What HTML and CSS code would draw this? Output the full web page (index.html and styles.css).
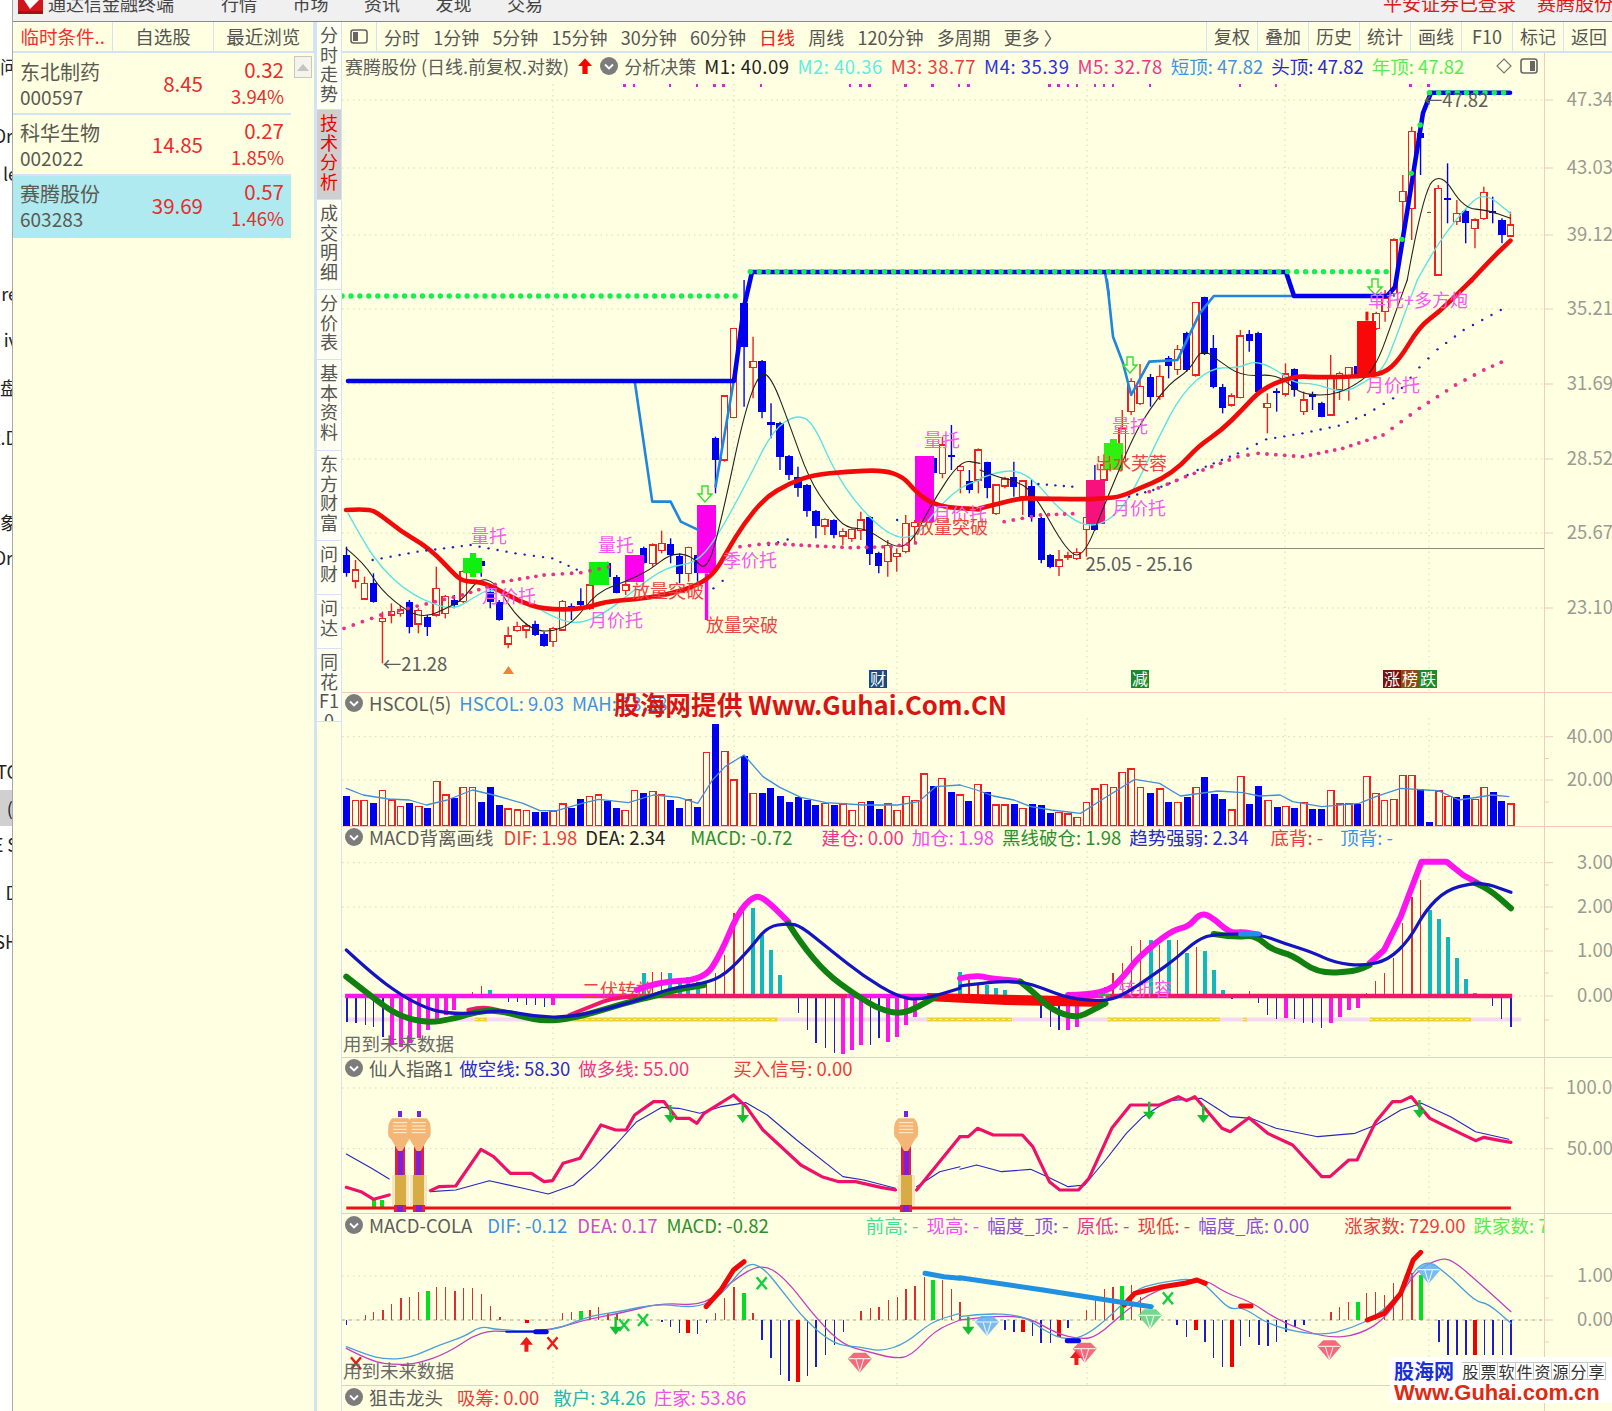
FILE: index.html
```html
<!DOCTYPE html>
<html lang="zh-CN">
<head>
    <meta charset="UTF-8">
    <title>通达信金融终端</title>
    <link rel="stylesheet" href="styles.css">
</head>
<body>
<div class="desk">
    <!-- the window behind the terminal, only its right edge shows -->
    <div class="behind">
        <div class="behind-line g54">问</div>
        <div class="behind-line g69">Dri</div>
        <div class="behind-line g38">le</div>
        <div class="behind-line g120">re</div>
        <div class="behind-line g46">iv</div>
        <div class="behind-line g48">盘</div>
        <div class="behind-line g50">x.D</div>
        <div class="behind-line g85">象</div>
        <div class="behind-line g35">Dri</div>
        <div class="behind-line g214">TC</div>
        <div class="behind-line g37 behind-picked">(I</div>
        <div class="behind-line g36">E S</div>
        <div class="behind-line g48">D</div>
        <div class="behind-line g49">SH</div>
    </div>

    <div class="app">
        <div class="titlebar">
            <svg class="logo" viewBox="0 0 25 14"><rect width="25" height="14" fill="#d2141c"/><path d="M6 0 L12 9 L21 0 Z" fill="#fff"/><rect y="11" width="25" height="3" fill="#a80f14"/></svg>
            <span class="app-name">通达信金融终端</span>
            <nav class="menu">
                <span>行情</span><span>市场</span><span>资讯</span><span>发现</span><span>交易</span>
            </nav>
            <div class="status">
                <span>平安证券已登录</span><span>赛腾股份</span>
            </div>
        </div>

        <div class="workspace">
            <!-- 左侧自选列表 -->
            <div class="stock-list">
                <div class="list-tabs">
                    <div class="list-tab is-on">临时条件..</div>
                    <div class="list-tab">自选股</div>
                    <div class="list-tab">最近浏览</div>
                </div>
                <div class="list-body">
                    <div class="rows">
                        <div class="stock">
                            <div class="stock-name"><span>东北制药</span><span>000597</span></div>
                            <div class="stock-price">8.45</div>
                            <div class="stock-change"><span>0.32</span><span class="pct">3.94%</span></div>
                        </div>
                        <div class="stock">
                            <div class="stock-name"><span>科华生物</span><span>002022</span></div>
                            <div class="stock-price">14.85</div>
                            <div class="stock-change"><span>0.27</span><span class="pct">1.85%</span></div>
                        </div>
                        <div class="stock is-picked">
                            <div class="stock-name"><span>赛腾股份</span><span>603283</span></div>
                            <div class="stock-price">39.69</div>
                            <div class="stock-change"><span>0.57</span><span class="pct">1.46%</span></div>
                        </div>
                    </div>
                    <div class="scroll-up"><svg viewBox="0 0 12 7" width="12" height="7"><path d="M6 0 L12 7 L0 7 Z" fill="#c4c4c0"/></svg></div>
                </div>
            </div>

            <!-- 竖排功能页签 -->
            <div class="side-tabs">
                <div class="side-tab t86">分时走势</div>
                <div class="side-tab t90 is-on">技术分析</div>
                <div class="side-tab t90">成交明细</div>
                <div class="side-tab t70">分价表</div>
                <div class="side-tab t91">基本资料</div>
                <div class="side-tab t90">东方财富</div>
                <div class="side-tab t54">问财</div>
                <div class="side-tab t54">问达</div>
                <div class="side-tab t73">同花F10</div>
            </div>

            <div class="chart-area">
                <div class="toolbar">
                    <div class="tool-icon"><svg viewBox="0 0 18 15" width="18" height="15"><rect x="1" y="1" width="16" height="13" rx="2.5" fill="none" stroke="#666" stroke-width="1.6"/><rect x="3" y="3" width="5" height="9" fill="#666"/></svg></div>
                    <div class="periods">
                        <span>分时</span><span>1分钟</span><span>5分钟</span><span>15分钟</span><span>30分钟</span><span>60分钟</span><span class="is-on">日线</span><span>周线</span><span>120分钟</span><span>多周期</span><span>更多 〉</span>
                    </div>
                    <div class="tools">
                        <span>复权</span><span>叠加</span><span>历史</span><span>统计</span><span>画线</span><span>F10</span><span>标记</span><span>返回</span>
                    </div>
                </div>

                <div class="panel panel-main">
                    <div class="legend legend-main">
                        <span class="c-gray stock-title">赛腾股份 (日线.前复权.对数)</span>
                        <svg class="up-arrow" viewBox="0 0 16 18" width="14" height="16"><path d="M8 0 L16 9 L11 9 L11 18 L5 18 L5 9 L0 9 Z" fill="#f00"/></svg>
                        <svg class="fold" viewBox="0 0 18 18"><circle cx="9" cy="9" r="9" fill="#7c7c7c"/><path d="M5 7.5 L9 11.5 L13 7.5" fill="none" stroke="#fff" stroke-width="1.8"/></svg>
                        <span class="c-gray stock-title">分析决策</span>
                        <span class="c-dark ma">M1: 40.09</span>
                        <span class="c-aqua ma">M2: 40.36</span>
                        <span class="c-red ma">M3: 38.77</span>
                        <span class="c-blue ma">M4: 35.39</span>
                        <span class="c-pink ma">M5: 32.78</span>
                        <span class="c-sky">短顶: 47.82</span>
                        <span class="c-navy">头顶: 47.82</span>
                        <span class="c-lime">年顶: 47.82</span>
                        <div class="legend-icons">
                            <svg viewBox="0 0 16 16" width="16" height="16"><path d="M8 1 L15 8 L8 15 L1 8 Z" fill="none" stroke="#777" stroke-width="1.2"/></svg>
                            <svg viewBox="0 0 18 16" width="18" height="16"><rect x="1" y="1" width="16" height="14" rx="2.5" fill="none" stroke="#666" stroke-width="1.6"/><rect x="10" y="3" width="5" height="10" fill="#666"/></svg>
                        </div>
                    </div>
                    <svg class="chart" id="chartMain" width="1270" height="608" viewBox="342 84 1270 608"></svg>
                </div>

                <div class="panel panel-vol">
                    <div class="legend">
                        <svg class="fold" viewBox="0 0 18 18"><circle cx="9" cy="9" r="9" fill="#7c7c7c"/><path d="M5 7.5 L9 11.5 L13 7.5" fill="none" stroke="#fff" stroke-width="1.8"/></svg>
                        <span class="c-gray">HSCOL(5)</span>
                        <span class="c-sky">HSCOL: 9.03</span>
                        <span class="c-sky">MAH: 13.28</span>
                    </div>
                    <svg class="chart" id="chartVol" width="1270" height="108" viewBox="342 718 1270 108"></svg>
                </div>

                <div class="panel panel-macd">
                    <div class="legend">
                        <svg class="fold" viewBox="0 0 18 18"><circle cx="9" cy="9" r="9" fill="#7c7c7c"/><path d="M5 7.5 L9 11.5 L13 7.5" fill="none" stroke="#fff" stroke-width="1.8"/></svg>
                        <span class="c-gray">MACD背离画线</span>
                        <span class="c-red m2">DIF: 1.98</span>
                        <span class="c-dark">DEA: 2.34</span>
                        <span class="c-green m17">MACD: -0.72</span>
                        <span class="c-pink m21">建仓: 0.00</span>
                        <span class="c-magenta">加仓: 1.98</span>
                        <span class="c-green">黑线破仓: 1.98</span>
                        <span class="c-navy">趋势强弱: 2.34</span>
                        <span class="c-red m14">底背: -</span>
                        <span class="c-sky m9">顶背: -</span>
                    </div>
                    <svg class="chart" id="chartMacd" width="1270" height="206" viewBox="342 851 1270 206"></svg>
                </div>

                <div class="panel panel-xr">
                    <div class="legend">
                        <svg class="fold" viewBox="0 0 18 18"><circle cx="9" cy="9" r="9" fill="#7c7c7c"/><path d="M5 7.5 L9 11.5 L13 7.5" fill="none" stroke="#fff" stroke-width="1.8"/></svg>
                        <span class="c-gray">仙人指路1</span>
                        <span class="c-navy mn2">做空线: 58.30</span>
                        <span class="c-pink">做多线: 55.00</span>
                        <span class="c-red m36">买入信号: 0.00</span>
                    </div>
                    <svg class="chart" id="chartXr" width="1270" height="131" viewBox="342 1082 1270 131"></svg>
                </div>

                <div class="panel panel-cola">
                    <div class="legend">
                        <svg class="fold" viewBox="0 0 18 18"><circle cx="9" cy="9" r="9" fill="#7c7c7c"/><path d="M5 7.5 L9 11.5 L13 7.5" fill="none" stroke="#fff" stroke-width="1.8"/></svg>
                        <span class="c-gray">MACD-COLA</span>
                        <span class="c-sky m7">DIF: -0.12</span>
                        <span class="c-purple m2">DEA: 0.17</span>
                        <span class="c-green m1">MACD: -0.82</span>
                        <span class="c-mint m89">前高: -</span>
                        <span class="c-magenta">现高: -</span>
                        <span class="c-violet">幅度_顶: -</span>
                        <span class="c-pink">原低: -</span>
                        <span class="c-red">现低: -</span>
                        <span class="c-violet">幅度_底: 0.00</span>
                        <span class="c-red m27">涨家数: 729.00</span>
                        <span class="c-lime">跌家数: 729.00</span>
                    </div>
                    <svg class="chart" id="chartCola" width="1270" height="145" viewBox="342 1240 1270 145"></svg>
                </div>

                <div class="panel panel-last">
                    <div class="legend">
                        <svg class="fold" viewBox="0 0 18 18"><circle cx="9" cy="9" r="9" fill="#7c7c7c"/><path d="M5 7.5 L9 11.5 L13 7.5" fill="none" stroke="#fff" stroke-width="1.8"/></svg>
                        <span class="c-gray">狙击龙头</span>
                        <span class="c-red m6">吸筹: 0.00</span>
                        <span class="c-teal m6">散户: 34.26</span>
                        <span class="c-magenta">庄家: 53.86</span>
                    </div>
                </div>
            </div>
        </div>
    </div>
</div>

<!-- 水印 -->
<div class="stamp-top">股海网提供 Www.Guhai.Com.CN</div>
<div class="stamp-corner">
    <div class="stamp-row">
        <span class="stamp-name">股海网</span>
        <span class="stamp-cells"><i>股</i><i>票</i><i>软</i><i>件</i><i>资</i><i>源</i><i>分</i><i>享</i></span>
    </div>
    <div class="stamp-url">Www.Guhai.com.cn</div>
</div>

<script src="charts.js"></script>
</body>
</html>
```

FILE: styles.css
```css
* {
    box-sizing: border-box;
}

html, body {
    margin: 0;
    width: 1612px;
    height: 1411px;
    overflow: hidden;
    background-color: #fff;
    font-family: "Noto Sans CJK SC", "Noto Sans", sans-serif;
    color: #555;
}

.desk {
    display: flex;
    height: 1411px;
}

/* 后面的窗口 */
.behind {
    width: 13px;
    flex: none;
    overflow: hidden;
    border-right: 1px solid #a8a8a8;
    font-size: 18px;
    color: #222;
}

.behind-line {
    height: 24px;
    line-height: 24px;
    width: 18px;
    display: flex;
    justify-content: flex-end;
    white-space: nowrap;
}

.behind-picked {
    background-color: #d0d0d0;
    height: 36px;
    line-height: 36px;
}

.g35 { margin-top: 11px; }
.g36 { margin-top: 6px; }
.g37 { margin-top: 7px; }
.g38 { margin-top: 14px; }
.g46 { margin-top: 22px; }
.g48 { margin-top: 24px; }
.g49 { margin-top: 25px; }
.g50 { margin-top: 26px; }
.g54 { margin-top: 54px; }
.g69 { margin-top: 45px; }
.g85 { margin-top: 61px; }
.g120 { margin-top: 96px; }
.g214 { margin-top: 190px; }

.app {
    flex: 1;
    display: flex;
    flex-direction: column;
    min-width: 0;
}

/* 标题栏 */
.titlebar {
    height: 22px;
    flex: none;
    display: flex;
    align-items: flex-start;
    overflow: hidden;
    background-color: #f0f0f0;
    border-bottom: 1px solid #8a8a8a;
    padding-left: 5px;
    font-size: 18px;
    line-height: 18px;
    color: #444;
}

.logo {
    width: 25px;
    height: 14px;
    flex: none;
}

.app-name {
    margin: -6px 0 0 5px;
}

.menu {
    display: flex;
    gap: 35.5px;
    margin: -6px 0 0 47px;
}

.status {
    display: flex;
    gap: 21px;
    margin: -6px 0 0 auto;
    color: #e01818;
    white-space: nowrap;
    width: 229px;
    font-size: 19px;
}

.workspace {
    flex: 1;
    display: flex;
    background-color: #ffffe1;
    min-height: 0;
}

/* 自选列表 */
.stock-list {
    width: 304px;
    flex: none;
    border-right: 3px solid #d2e3f6;
    display: flex;
    flex-direction: column;
}

.list-tabs {
    height: 31px;
    flex: none;
    display: flex;
    border-bottom: 2px solid #d2e3f6;
}

.list-tab {
    flex: 1;
    text-align: center;
    font-size: 18.5px;
    line-height: 28px;
    border-right: 1px solid #d2e3f6;
    white-space: nowrap;
}

.list-tab.is-on {
    color: #f03030;
}

.list-body {
    display: flex;
    flex: 1;
}

.rows {
    width: 278px;
    flex: none;
    padding-top: 1px;
}

.stock {
    height: 61px;
    display: flex;
    padding: 0 7px;
    border-bottom: 2px solid #d2e3f6;
    color: #ea2c2c;
}

.stock.is-picked {
    background-color: #aeeaf0;
    border-bottom: none;
    height: 62px;
}

.stock-name {
    display: flex;
    flex-direction: column;
    color: #5a5a50;
    width: 100px;
    font-size: 20px;
    line-height: 26px;
    padding-top: 5px;
}

.stock-name span:last-child {
    font-size: 19px;
    line-height: 24px;
}

.stock-price {
    width: 83px;
    text-align: right;
    font-size: 20.5px;
    line-height: 58px;
}

.stock-change {
    flex: 1;
    display: flex;
    flex-direction: column;
    align-items: flex-end;
    font-size: 20.5px;
    line-height: 26px;
    padding-top: 2px;
}

.pct {
    font-size: 18.5px;
    line-height: 28px;
}

.scroll-up {
    width: 18px;
    height: 22px;
    margin: 3px 0 0 3px;
    border: 1px solid #c8c8c0;
    background-color: #f4f4ec;
    display: flex;
    align-items: center;
    justify-content: center;
}

/* 竖排页签 */
.side-tabs {
    width: 25px;
    flex: none;
    border-right: 1px solid #d2e3f6;
}

.side-tab {
    width: 24px;
    padding: 3px 2px 0;
    font-size: 18px;
    line-height: 19.5px;
    text-align: center;
    word-break: break-all;
    overflow: hidden;
    background-color: #fffff2;
    border-bottom: 1px solid #d2e3f6;
}

.side-tab.is-on {
    background-color: #cfcfcf;
    color: #f00000;
}

.t54 { height: 54px; }
.t70 { height: 70px; }
.t73 { height: 73px; }
.t86 { height: 88px; }
.t90 { height: 90px; }
.t91 { height: 91px; }

/* 工具栏 */
.chart-area {
    flex: 1;
    min-width: 0;
    display: flex;
    flex-direction: column;
}

.toolbar {
    height: 31px;
    flex: none;
    display: flex;
    align-items: center;
    border-bottom: 2px solid #d2e3f6;
    font-size: 18px;
    white-space: nowrap;
}

.tool-icon {
    width: 35px;
    height: 100%;
    flex: none;
    display: flex;
    align-items: center;
    justify-content: center;
    border-right: 1px solid #d2e3f6;
}

.periods {
    display: flex;
    gap: 13.2px;
    padding-left: 7px;
}

.periods .is-on {
    color: #f02020;
}

.tools {
    display: flex;
    margin-left: auto;
    height: 100%;
    width: 406px;
    overflow: hidden;
}

.tools span {
    width: 51px;
    flex: none;
    text-align: center;
    line-height: 28px;
    border-left: 1px solid #d2e3f6;
}

/* 图表分区 */
.panel {
    flex: none;
    border-bottom: 1px solid #f2c8c0;
    overflow: hidden;
}

.panel-main { height: 640px; }
.panel-vol { height: 134px; }
.panel-macd { height: 231px; }
.panel-xr { height: 156px; }
.panel-cola { height: 172px; }
.panel-last { flex: 1; border-bottom: none; }

.legend {
    width: 1203px;
    height: 25px;
    display: flex;
    align-items: center;
    gap: 8px;
    padding: 0 0 4px 3px;
    border-right: 1px solid #f2c8c0;
    font-size: 18.5px;
    white-space: nowrap;
    overflow: hidden;
}

.legend-main {
    height: 31px;
    padding-bottom: 6px;
}

.panel-vol .legend { padding-bottom: 6px; }

.stock-title {
    font-size: 18px;
}

.ma {
    letter-spacing: 0.5px;
}

.panel-macd .legend { height: 24px; }
.panel-xr .legend { height: 24px; }
.panel-cola .legend { height: 26px; }

.fold {
    width: 18px;
    height: 18px;
    flex: none;
    margin-right: -2px;
}

.up-arrow {
    flex: none;
    margin-left: 1px;
}

.legend-icons {
    display: flex;
    align-items: center;
    gap: 8px;
    margin-left: auto;
    padding-right: 6px;
}

/* 各指标之间多出来的间距 */
.mn2 { margin-left: -2px; }
.m1 { margin-left: 1px; }
.m2 { margin-left: 2px; }
.m6 { margin-left: 6px; }
.m7 { margin-left: 7px; }
.m9 { margin-left: 9px; }
.m14 { margin-left: 14px; }
.m17 { margin-left: 17px; }
.m21 { margin-left: 21px; }
.m27 { margin-left: 27px; }
.m36 { margin-left: 36px; }
.m89 { margin-left: 89px; }

.chart {
    display: block;
    overflow: visible;
}

.c-gray { color: #5c5c5c; }
.c-dark { color: #222; }
.c-aqua { color: #58f0e4; }
.c-red { color: #ee3c3c; }
.c-blue { color: #2f2fe4; }
.c-pink { color: #f0358c; }
.c-sky { color: #3f92e2; }
.c-navy { color: #2a2acb; }
.c-lime { color: #52ee52; }
.c-green { color: #2e8e2e; }
.c-magenta { color: #f24ff2; }
.c-purple { color: #c850c8; }
.c-violet { color: #8a50d8; }
.c-mint { color: #3ce49a; }
.c-teal { color: #28b6b0; }

/* svg 文字 */
.axis-label {
    font-size: 18.5px;
    fill: #9a9a92;
}

.note {
    font-size: 18px;
}

.note-pink { fill: #f45af0; }
.note-red { fill: #ec4444; }
.note-gray { fill: #5c5c5c; font-size: 18.5px; }
.note-faint { fill: #6a6a6a; font-size: 18.5px; }

.flag-text {
    font-size: 16px;
    fill: #fff;
}

/* 水印 */
.stamp-top {
    position: absolute;
    left: 614px;
    top: 686px;
    font-size: 25.7px;
    line-height: 36px;
    font-weight: 700;
    color: #d81414;
    white-space: nowrap;
}

.stamp-corner {
    position: absolute;
    left: 1390px;
    top: 1357px;
    width: 222px;
    height: 46px;
    background-color: #fff;
    padding: 2px 0 0 4px;
}

.stamp-row {
    display: flex;
    align-items: center;
    gap: 8px;
    height: 24px;
}

.stamp-name {
    font-size: 20px;
    font-weight: 700;
    color: #1a2fd8;
    line-height: 24px;
}

.stamp-cells {
    display: flex;
    font-size: 16px;
    line-height: 16px;
    color: #333;
}

.stamp-cells i {
    width: 18px;
    text-align: center;
    font-style: normal;
    border: 1px solid #c8c8c8;
    border-left: none;
}

.stamp-url {
    font-family: "Liberation Sans", sans-serif;
    font-size: 22px;
    line-height: 20px;
    font-weight: 700;
    color: #e02a10;
}
```

FILE: charts.js
```js
// traced series: each set of numbers is read in one of these views
// [left, xScale, top, yScale] => page x = left + vx / xScale, page y = top + vy / yScale
const views = {
    p: [0, 1, 0, 1],
    a: [340, 2.45, 280, 3],
    b: [980, 2.481, 280, 3],
    c: [980, 2.481, 0, 3],
    d: [300, 2.376, 680, 3],
    e: [960, 2.405, 680, 3],
    f: [300, 2.376, 1050, 3],
    g: [960, 2.405, 1050, 3]
};

const SVG_NS = 'http://www.w3.org/2000/svg';
const BG = '#ffffe1';
const GRID_XS = [553, 734, 897, 1087, 1285, 1429];

function px(v, x) { return views[v][0] + x / views[v][1]; }
function py(v, y) { return views[v][2] + y / views[v][3]; }

function add(svg, tag, attrs, text) {
    const el = document.createElementNS(SVG_NS, tag);
    for (const k in attrs) el.setAttribute(k, attrs[k]);
    if (text) el.textContent = text;
    svg.appendChild(el);
    return el;
}

function rect(svg, x1, y1, x2, y2, fill, extra) {
    return add(svg, 'rect', Object.assign({ x: x1, y: y1, width: x2 - x1, height: y2 - y1, fill: fill, 'shape-rendering': 'crispEdges' }, extra));
}

function seg(svg, x1, y1, x2, y2, stroke, w) {
    return add(svg, 'line', { x1: x1, y1: y1, x2: x2, y2: y2, stroke: stroke, 'stroke-width': w });
}

// "x,y x,y ..." in view coordinates
function points(v, str) {
    return str.trim().split(/\s+/).map(p => {
        const n = p.split(',').map(Number);
        return [px(v, n[0]), py(v, n[1])];
    });
}

function line(svg, v, str, stroke, w) {
    add(svg, 'polyline', {
        points: points(v, str).map(p => p.join(',')).join(' '),
        fill: 'none', stroke: stroke, 'stroke-width': w,
        'stroke-linejoin': 'round', 'stroke-linecap': 'round'
    });
}

// same as line, but rounded through the midpoints (moving averages)
function curve(svg, v, str, stroke, w) {
    const p = points(v, str);
    let d = `M${p[0][0]} ${p[0][1]}`;
    for (let i = 1; i < p.length - 1; i++) {
        const mx = (p[i][0] + p[i + 1][0]) / 2, my = (p[i][1] + p[i + 1][1]) / 2;
        d += ` Q${p[i][0]} ${p[i][1]} ${mx} ${my}`;
    }
    d += ` L${p[p.length - 1][0]} ${p[p.length - 1][1]}`;
    add(svg, 'path', { d: d, fill: 'none', stroke: stroke, 'stroke-width': w, 'stroke-linecap': 'round' });
}

// one dot per bar along a traced line
function dots(svg, v, str, r, fill, step) {
    const pts = points(v, str);
    for (let i = 1; i < pts.length; i++) {
        const dx = pts[i][0] - pts[i - 1][0], dy = pts[i][1] - pts[i - 1][1];
        const n = Math.max(1, Math.round(Math.abs(dx) / step));
        for (let k = 0; k < n; k++) {
            add(svg, 'circle', { cx: pts[i - 1][0] + dx * k / n, cy: pts[i - 1][1] + dy * k / n, r: r, fill: fill });
        }
    }
}

function frame(svg, ys, y1, y2, labels, minor) {
    ys.forEach(y => seg(svg, 342, y, 1544, y, '#d9d9ae', 1).setAttribute('stroke-dasharray', '1.5 4'));
    GRID_XS.forEach(x => seg(svg, x, y1, x, y2, '#d9d9ae', 1).setAttribute('stroke-dasharray', '1.5 4'));
    seg(svg, 1544.5, y1, 1544.5, y2, '#f2c8c0', 1);
    ys.forEach(y => seg(svg, 1545, y, 1553, y, '#f2c8c0', 1));
    (minor || []).forEach(y => seg(svg, 1545, y, 1549, y, '#f2c8c0', 1));
    labels.forEach((t, i) => {
        const wide = t.length > 5;
        add(svg, 'text', { class: 'axis-label', x: wide ? 1566 : 1613, y: ys[i] + 6, 'text-anchor': wide ? 'start' : 'end' }, t);
    });
}

function candles(svg, v, str) {
    str.trim().split(/\s+/).forEach(c => {
        const kind = c[0];
        const n = c.slice(1).split(',').map(Number);
        const x = px(v, n[0]), top = py(v, n[1]), bot = py(v, n[2]), hi = py(v, n[3]), lo = py(v, n[4]);
        const col = kind === 'r' ? '#f02020' : '#0000f0';
        seg(svg, x, hi, x, lo, col, 1.4);
        if (kind === 'r') {
            rect(svg, x - 3.2, top, x + 3.2, bot, BG, { stroke: col, 'stroke-width': 1.4 });
        } else {
            rect(svg, x - 3.6, top, x + 3.6, Math.max(bot, top + 2), col);
        }
    });
}

function bars(svg, v, str, base) {
    const widths = { r: 1.3, b: 1.3, c: 4, m: 4, g: 4, R: 4, o: 6.4, f: 7 };
    const colors = { r: '#e02c2c', b: '#1a1ad8', c: '#10b8bc', m: '#ff14f0', g: '#00e020', R: '#f00000', o: '#f02020', f: '#0000f0' };
    str.trim().split(/\s+/).forEach(b => {
        const k = b[0], n = b.slice(1).split(',').map(Number);
        const x = px(v, n[0]), y = py(v, n[1]), w = widths[k];
        const t = Math.min(y, base), h = Math.max(y, base);
        if (k === 'o') {
            rect(svg, x - w / 2, t, x + w / 2, h, BG, { stroke: colors[k], 'stroke-width': 1.4 });
        } else {
            rect(svg, x - w / 2, t, x + w / 2, h, colors[k]);
        }
    });
}

function note(svg, text, x, y, cls) {
    add(svg, 'text', { class: 'note ' + cls, x: x, y: y + 6, 'text-anchor': 'middle' }, text);
}

function block(svg, v, x1, x2, y1, y2, fill) {
    rect(svg, px(v, x1), py(v, y1), px(v, x2), py(v, y2), fill);
}

function hollowArrow(svg, x, y) {
    add(svg, 'path', { d: `M${x - 3} ${y} h6 v8 h4 l-7 8 l-7 -8 h4 Z`, fill: 'none', stroke: '#30e030', 'stroke-width': 1.4 });
}

function flag(svg, x, y, fill, t) {
    rect(svg, x, y, x + 18, y + 18, fill);
    add(svg, 'text', { class: 'flag-text', x: x + 9, y: y + 15, 'text-anchor': 'middle' }, t);
}

function downArrow(svg, x, y) {
    add(svg, 'path', { d: `M${x - 1.2} ${y} h2.4 v10 h5 l-6.2 8 l-6.2 -8 h5 Z`, fill: '#10c030' });
}

function upArrow(svg, x, y) {
    add(svg, 'path', { d: `M${x} ${y} l6.5 8 h-4.5 v7 h-4 v-7 h-4.5 Z`, fill: '#f01818' });
}

function cross(svg, x, y, color) {
    seg(svg, x - 5, y - 6, x + 5, y + 6, color, 2.4);
    seg(svg, x + 5, y - 6, x - 5, y + 6, color, 2.4);
}

function gem(svg, x, y, color) {
    add(svg, 'path', { d: `M${x - 6} ${y - 9} h12 l6 6 l-12 14 l-12 -14 Z`, fill: color, opacity: 0.85 });
    add(svg, 'path', { d: `M${x - 11} ${y - 3} h22 M${x - 4} ${y - 3} l4 13 l4 -13`, fill: 'none', stroke: '#fff', 'stroke-width': 1.1, opacity: 0.8 });
}

function totem(svg, vx) {
    const v = 'f', cx = px(v, vx);
    const Y = y => py(v, y);
    rect(svg, cx - 8.5, Y(375), cx + 8.5, Y(468), '#f5e7c4');
    rect(svg, cx - 5.5, Y(375), cx + 5.5, Y(465), '#d9ab45');
    rect(svg, cx - 6, Y(465), cx + 6, Y(485), '#e0203c');
    rect(svg, cx - 3, Y(465), cx + 3, Y(485), '#7a20e0');
    rect(svg, cx - 5, Y(285), cx + 5, Y(375), '#e0203c');
    rect(svg, cx - 2.5, Y(285), cx + 2.5, Y(375), '#7a20e0');
    rect(svg, cx - 2, Y(183), cx + 2, Y(202), '#7a20e0');
    add(svg, 'path', { d: `M${cx - 8} ${Y(205)} h16 q4 4 4 10 v6 q0 3 -3 5 l-7 ${Y(285) - Y(250)} h-4 l-7 ${Y(250) - Y(285)} q-3 -2 -3 -5 v-6 q0 -6 4 -10 Z`, fill: '#f3b676' });
    [218, 228, 238, 248].forEach(y => seg(svg, cx - 7, Y(y), cx + 7, Y(y), '#fff0d4', 1));
}

/* ---------- 主图 ---------- */
function drawMain() {
    const s = document.getElementById('chartMain');
    frame(s, [100, 168, 235, 309, 384, 459, 533, 608],
        84, 692, ['47.34', '43.03', '39.12', '35.21', '31.69', '28.52', '25.67', '23.10']);

    seg(s, 1087, 548.5, 1544, 548.5, '#8a8a80', 1);
    // low price wick
    seg(s, px('a', 104), py('a', 1000), px('a', 104), py('a', 1150), '#f02020', 1.4);

    candles(s, 'a', `b16,825,878,800,890 r38,870,903,840,925 r60,910,957,890,960 b82,908,965,880,968
        r104,1015,1025,995,1030 r126,995,1005,970,1030 r148,990,1000,975,1010 b170,965,1040,960,1060
        r192,992,1032,985,1060 b214,1010,1042,1005,1068 r236,925,1005,860,1010 r258,950,1000,945,1015
        b280,960,975,945,985 r302,875,965,870,970 b346,843,858,835,890 b368,935,965,920,985
        b390,965,1020,960,1022 r412,1068,1092,1040,1105 r434,1040,1052,1025,1055 r456,1038,1050,1030,1075
        b478,1032,1065,1022,1068 b500,1062,1098,1055,1100 r522,1045,1085,1040,1100 r545,965,1050,960,1052
        b567,978,988,970,1020 b590,962,976,925,980 r612,915,985,910,990 b656,848,890,845,895
        b678,890,938,885,940 r700,915,932,905,945 b744,805,850,800,852 r766,795,850,790,860
        r788,790,812,752,820 b810,793,825,775,850 b832,828,882,820,910 r854,802,880,800,905
        b876,825,880,820,905 b920,473,540,470,640 r942,348,540,345,545 r964,145,412,145,415
        b990,68,200,0,380 r1012,245,262,170,355 b1034,242,395,240,415 b1056,425,436,370,475
        b1078,428,530,425,570 b1100,527,585,525,600 b1122,590,625,560,650 b1144,615,693,612,710
        b1166,692,738,690,775 r1188,718,738,715,765 b1210,720,765,718,775 r1232,755,768,745,795
        r1254,748,775,745,785 r1276,720,752,695,780 b1298,710,822,708,855 b1320,820,858,815,880
        r1342,797,845,780,890 r1364,820,830,805,875 r1386,730,815,705,820 r1408,727,740,720,790
        b1454,535,580,530,585 r1476,495,580,470,595 b1498,525,530,435,570 r1520,560,572,555,640
        b1542,603,630,570,640 r1564,510,600,505,640`);

    candles(s, 'b', `b18,545,625,545,655 r40,615,700,612,705 r62,597,618,590,625 b84,590,622,545,650
        r106,603,650,600,705 b128,618,710,600,725 b152,715,840,710,850 b174,825,862,822,865
        r196,840,860,810,888 r218,828,832,815,840 r240,818,835,805,840 r264,712,748,650,830
        b285,600,750,555,752 r307,555,600,545,640 r353,445,545,390,550 r375,305,395,295,405
        r397,320,370,252,375 b423,290,350,282,380 r446,290,350,255,360 b468,235,258,228,295
        r490,208,268,195,285 b513,158,270,155,275 r535,68,285,68,290 b557,50,222,50,225
        b579,203,322,165,325 b602,322,385,312,400 r624,348,375,340,380 r646,168,352,150,355
        b668,162,182,150,215 b690,158,335,155,340 r713,370,382,340,460 b736,333,338,325,395
        r758,282,342,250,350 b780,268,330,265,350 r803,360,395,335,405 b825,342,350,335,390
        b848,370,410,365,412 r870,290,405,225,408 r892,280,330,275,360 r915,263,290,262,362
        b937,258,290,255,295 r983,100,145,95,150 r1005,55,95,30,125`);

    candles(s, 'c', `b1027,860,880,830,890 r1027,720,880,715,885 r1049,575,605,525,720 r1071,395,625,380,720
        b1093,400,415,375,525 r1137,565,825,555,828 b1160,595,600,490,670 r1183,640,665,600,675
        b1205,632,670,628,730 r1228,660,685,655,745 r1250,578,655,560,660 b1272,632,640,590,670
        b1295,660,705,655,730 r1316,675,708,635,710`);
    rect(s, px('c', 1108), py('c', 637), px('c', 1120), py('c', 639), '#555');

    // 信号大阳/大阴块
    seg(s, px('a', 898), py('a', 880), px('a', 898), py('a', 1020), '#ff00f0', 3.4);
    block(s, 'a', 302, 348, 835, 878, '#10f010');
    block(s, 'a', 318, 332, 820, 890, '#10f010');
    block(s, 'a', 610, 658, 845, 915, '#10f010');
    block(s, 'a', 698, 746, 825, 905, '#ff00ee');
    block(s, 'a', 875, 920, 675, 880, '#ff00ee');
    block(s, 'a', 1408, 1455, 527, 725, '#ff00ee');
    block(s, 'b', 263, 310, 600, 733, '#f8107c');
    block(s, 'b', 307, 355, 490, 570, '#30f010');
    block(s, 'b', 322, 340, 478, 495, '#30f010');
    block(s, 'b', 936, 983, 122, 285, '#f80808');
    seg(s, px('b', 960), py('b', 95), px('b', 960), py('b', 122), '#f80808', 3);

    // 压力线
    line(s, 'a', '722,303 765,665 810,665 835,725 875,748', '#1e86dc', 2.6);
    line(s, 'a', '920,620 965,300', '#1e86dc', 2.6);
    line(s, 'c', '310,815 320,885', '#1e86dc', 2.6);
    line(s, 'b', '315,0 330,170 355,250 375,345 420,245 490,240 545,100 580,48 780,48', '#1e86dc', 2.6);

    curve(s, 'a', '20,700 60,790 100,860 150,920 210,965 280,990 330,950 370,925 450,960 520,1010 580,1035 650,1000 720,930 800,860 870,850 920,780 1000,600 1060,450 1120,402 1160,430 1210,570 1270,680 1350,770 1410,775 1460,690 1520,620 1568,600', '#5ce4e4', 1.4);
    curve(s, 'b', '0,595 60,568 110,580 150,620 190,680 250,735 300,735 350,690 390,610 440,480 500,340 575,262 640,265 680,242 730,265 780,310 830,310 900,340 950,310 1000,270 1030,180 1060,80 1085,0', '#5ce4e4', 1.4);
    curve(s, 'c', '1085,840 1130,740 1200,630 1250,575 1316,640', '#5ce4e4', 1.4);

    curve(s, 'a', '15,805 60,850 100,930 170,1000 215,1010 260,985 300,960 340,895 380,905 420,990 470,1050 520,1055 570,1030 630,935 700,905 760,870 810,820 860,825 900,880 940,690 990,400 1030,270 1060,300 1100,430 1150,600 1200,690 1240,745 1290,745 1360,805 1400,790 1450,670 1520,540 1568,550', '#222', 1.1);
    curve(s, 'b', '0,570 40,590 80,600 130,630 220,825 260,825 310,670 380,470 420,390 470,310 520,270 550,205 590,240 650,290 740,282 790,340 860,348 920,325 980,270 1030,100 1060,0', '#222', 1.1);
    curve(s, 'c', '1060,840 1100,570 1145,518 1200,625 1260,630 1316,655', '#222', 1.1);

    // 顶线
    line(s, 'p', '348,381 734,381 744,307 752,272 1286,272 1294,296 1387,296 1395,287 1423,113 1431,92.7 1510,92.7', '#0000f0', 4.6);

    // 红线
    curve(s, 'a', '15,690 70,685 100,705 150,755 200,790 240,830 270,870 300,905 345,905 390,930 440,965 500,988 590,988 650,965 720,958 800,945 880,915 920,875 950,810 990,730 1040,655 1100,610 1160,585 1240,575 1330,570 1380,590 1410,635 1460,680 1568,688', '#f00a0a', 4.6);
    curve(s, 'b', '0,685 50,670 100,655 130,655 262,658 310,655 350,650 400,622 450,598 500,555 540,500 600,450 650,390 700,325 780,288 830,292 940,290 1000,282 1040,240 1090,140 1140,95 1190,35 1220,0', '#f00a0a', 4.6);
    curve(s, 'c', '1220,840 1270,775 1316,722', '#f00a0a', 4.6);

    // 绿点
    dots(s, 'a', '5,48 990,48', 2.7, '#14f050', 8.95);
    dots(s, 'c', '-570,815 1030,815', 2.7, '#14f050', 8.95);
    dots(s, 'c', '1115,278 1322,278', 2.7, '#14f050', 8.95);
    [[1092, 375], [1070, 520], [1047, 718]].forEach(p => add(s, 'circle', { cx: px('c', p[0]), cy: py('c', p[1]), r: 2.7, fill: '#14f050' }));

    // 均线点
    dots(s, 'a', '80,840 190,815 320,795 430,820 520,835 600,880', 1.2, '#2020c0', 8.95);
    dots(s, 'a', '915,925 960,880', 1.2, '#2020c0', 8.95);
    dots(s, 'a', '1050,795 1120,770', 1.2, '#2020c0', 8.95);
    dots(s, 'a', '1365,720 1390,710', 1.2, '#2020c0', 8.95);
    dots(s, 'b', '145,612 250,622', 1.2, '#2020c0', 8.95);
    dots(s, 'b', '370,650 430,630 490,600 540,570 640,520 710,478 800,460 890,437 955,405 1025,355 1090,262 1135,208 1200,150 1315,75', 1.2, '#2020c0', 8.95);

    dots(s, 'a', '10,1045 100,1005 300,945 400,905 500,885 590,878 680,855', 1.9, '#ec2f8a', 8.95);
    dots(s, 'a', '980,800 1050,790 1150,797 1250,803 1350,800 1430,785', 1.9, '#ec2f8a', 8.95);
    dots(s, 'b', '60,725 150,705 250,700', 1.9, '#ec2f8a', 8.95);
    dots(s, 'b', '420,635 510,590 640,530 690,520 800,530 900,505 1000,465 1090,385 1180,315 1250,270 1315,235', 1.9, '#ec2f8a', 8.95);

    // 顶部信号点
    [697, 720, 808, 875, 918, 940, 1032, 1250, 1275, 1297, 1385, 1452, 1517, 1540].forEach(x => rect(s, px('a', x) - 1.2, 84, px('a', x) + 1.2, 87, '#e020e0'));
    [172, 195, 218, 240, 285, 308, 330, 422, 645, 735, 1068, 1113].forEach(x => rect(s, px('c', x) - 1.2, 84, px('c', x) + 1.2, 87, '#e020e0'));

    hollowArrow(s, 705, 486);
    hollowArrow(s, 1130, 357);
    hollowArrow(s, 1375, 279);

    // 标注
    note(s, '量托', 489, 537, 'note-pink');
    note(s, '月价托', 509, 597, 'note-pink');
    note(s, '量托', 616, 546, 'note-pink');
    note(s, '月价托', 616, 621, 'note-pink');
    note(s, '放量突破', 668, 592, 'note-red');
    note(s, '季价托', 750, 561, 'note-pink');
    note(s, '放量突破', 742, 626, 'note-red');
    note(s, '量托', 942, 441, 'note-pink');
    note(s, '月价托', 960, 515, 'note-pink');
    note(s, '放量突破', 952, 528, 'note-red');
    note(s, '量托', 1130, 427, 'note-pink');
    note(s, '出水芙蓉', 1131, 464, 'note-red');
    note(s, '月价托', 1139, 509, 'note-pink');
    note(s, '单托+多方炮', 1418, 301, 'note-pink');
    note(s, '月价托', 1393, 386, 'note-pink');
    note(s, '←21.28', 415, 665, 'note-gray');
    note(s, '25.05 - 25.16', 1139, 565, 'note-gray');
    note(s, '←47.82', 1456, 101, 'note-gray');

    add(s, 'path', { d: 'M503 674 l5.5 -8 l5.5 8 Z', fill: '#f2803c' });
    flag(s, 869, 670, '#1a4a80', '财');
    flag(s, 1131, 670, '#1a8a2a', '减');
    flag(s, 1383, 670, '#7a1010', '涨');
    flag(s, 1401, 670, '#8a4a10', '榜');
    flag(s, 1419, 670, '#1a8a2a', '跌');
}

/* ---------- HSCOL ---------- */
function drawVol() {
    const s = document.getElementById('chartVol');
    frame(s, [736.7, 780], 718, 826, ['40.00', '20.00'], [758.5, 802]);
    bars(s, 'd', `f111,348 o132,362 o153,362 f175,370 o196,332 o218,360 o239,380 f261,370 o282,380 f303,385
        o325,305 o346,345 f367,355 o388,322 o410,322 f431,365 f452,320 f474,375 o495,387 o517,390 o538,392
        f560,397 f581,395 o602,395 o624,372 f645,385 f667,357 o688,350 o709,345 f731,362 f752,385 o773,392
        o795,332 f816,340 o838,335 o859,345 f880,360 f902,385 o923,360 f945,380 o966,218 f988,132 o1009,215
        o1031,300 f1055,228 o1077,340 f1098,340 f1119,325 f1141,348 f1162,367 f1184,350 f1205,360 f1226,375
        o1248,370 f1270,375 o1291,372 o1312,392 o1334,367 f1355,362 f1376,388 o1398,372 o1419,392 o1440,350
        o1462,362 o1483,282 f1505,318 o1525,295 f1547,335`, 826);
    bars(s, 'e', `o0,345 f21,362 o43,313 f65,335 o86,375 o108,375 f130,372 o151,385 f174,372 f195,375 f217,398
        o238,398 o260,402 o282,412 o304,367 o325,327 o347,313 o369,322 o390,277 o412,267 o434,322 f459,340
        o481,327 f502,367 o524,367 f546,350 o568,322 f589,290 f611,343 f632,358 o654,390 o675,290 f697,372
        f719,317 o741,362 f763,380 o784,380 f805,385 o827,367 f848,388 f870,388 o892,332 o914,372 o935,372
        f957,372 o978,290 o1000,340 o1021,362 o1043,358 o1065,287 o1087,287 f1108,327 f1130,425 o1152,333
        o1174,350 f1195,350 f1217,345 o1239,358 o1261,322 f1282,335 f1303,362 o1325,372`, 826);
    line(s, 'd', '110,325 150,345 210,357 260,360 300,375 350,360 410,330 460,345 530,370 570,392 610,392 670,370 710,358 780,368 840,345 900,352 945,370 980,300 1010,260 1055,225 1100,290 1140,322 1190,352 1250,368 1340,375 1420,375 1470,365 1510,320 1568,315', '#3f8fd8', 1.3);
    line(s, 'e', '0,315 40,330 80,348 130,360 170,380 220,390 290,400 340,360 420,298 480,310 530,348 620,333 680,338 720,348 770,345 800,365 870,380 960,370 1000,350 1060,325 1120,330 1150,332 1200,360 1280,345 1320,350', '#3f8fd8', 1.3);
}

/* ---------- MACD背离 ---------- */
function drawMacd() {
    const s = document.getElementById('chartMacd');
    frame(s, [862.7, 907, 951, 996], 851, 1057, ['3.00', '2.00', '1.00', '0.00'], [885, 929, 973, 1020]);

    // 底部强弱条
    [['d', 110, 415, '#f4d8f0'], ['d', 415, 445, '#f0d030'], ['d', 445, 650, '#f4d8f0'], ['d', 650, 1135, '#f0d030'], ['d', 1135, 1490, '#f4d8f0'], ['d', 1490, 1568, '#f0d030'],
     ['e', 0, 125, '#f0d030'], ['e', 125, 355, '#f4d8f0'], ['e', 355, 625, '#f0d030'], ['e', 625, 680, '#f4d8f0'], ['e', 680, 690, '#f0d030'], ['e', 690, 985, '#f4d8f0'], ['e', 985, 1230, '#f0d030'], ['e', 1230, 1350, '#f4d8f0']]
        .forEach(b => {
            seg(s, px(b[0], b[1]), 1019.5, px(b[0], b[2]), 1019.5, b[3], 4);
            if (b[3] === '#f0d030') seg(s, px(b[0], b[1]), 1019.5, px(b[0], b[2]), 1019.5, '#fff3b0', 1).setAttribute('stroke-dasharray', '3 3');
        });

    const base = 996;
    bars(s, 'd', `b112,1025 b133,1030 b155,1035 b175,1040 b197,1070 m218,1095 m240,1100 m262,1090 m283,1075 m304,1050 m325,1020 m346,1005 m367,990
        r410,935 r431,918 c452,930 b495,965 b517,965 b538,975 b560,975 b581,980 m602,975
        c817,880 r838,875 r859,875 c880,880 c902,905 c923,890 c945,905 r966,905 r988,880 r1009,825 r1031,700 r1053,690 c1076,685 c1098,765 c1119,810 c1141,885
        b1184,1000 b1205,1050 b1226,1090 b1248,1105 b1270,1120 m1290,1122 m1312,1110 m1334,1095 b1355,1095 b1376,1075 m1398,1085 m1419,1070 m1440,1035 m1462,1010`, base);
    bars(s, 'e', `c0,875 r22,900 r43,915 c65,915 c87,925 c108,930 b195,1013 b217,1040 b238,1050 m260,1050 m282,1040
        r347,920 r368,880 r390,848 r412,798 r434,780 c459,780 r480,795 c502,780 r523,780 c546,820 r568,800 c589,812 c611,870 c632,930 b654,958 r697,932
        b718,970 b740,1005 b761,1018 m783,1015 b805,1018 b826,1030 b848,1030 b870,1045 m892,1028 m914,1010 m935,990 m957,985
        r978,938 r1000,903 r1021,880 r1043,835 r1065,730 r1087,650 r1108,600 c1130,690 c1152,718 c1174,770 c1195,835 c1217,898 c1239,940
        b1281,978 b1303,1018 b1325,1040`, base);

    // 零轴
    seg(s, px('d', 107), base, px('d', 780), base, '#ff14f0', 4.6);
    seg(s, px('d', 780), base, px('d', 1300), base, '#f0186a', 4.6);
    seg(s, px('d', 1300), base, px('d', 1490), base, '#ff14f0', 4.6);
    seg(s, px('e', 350), base, px('e', 1328), base, '#f0186a', 4.6);
    seg(s, px('e', 260), base, px('e', 345), base, '#ff14f0', 4.6);
    add(s, 'polygon', { points: `${px('d', 1490)},993 ${px('e', 255)},996 ${px('e', 355)},1000 ${px('e', 350)},1007 ${px('e', 110)},1005 ${px('d', 1490)},1001`, fill: '#f40808' });

    add(s, 'text', { class: 'note note-faint', x: 343, y: 1051 }, '用到未来数据');
    note(s, '二伏转放', 618, 991, 'note-red');
    note(s, '转折容', 1145, 990, 'note-pink');

    curve(s, 'd', '640,1005 700,975 740,955 790,950', '#f0186a', 4);
    curve(s, 'd', '400,990 430,980 470,990', '#f0186a', 4);
    curve(s, 'd', '800,930 850,905 960,900 1000,820 1040,700 1075,650 1100,650 1160,725', '#ff14f0', 6);
    curve(s, 'e', '0,895 40,885 70,895 120,900 145,905', '#ff14f0', 6);
    curve(s, 'e', '260,945 350,945 400,880 430,830 510,750 550,740 575,702 600,705 650,760 680,755 720,765', '#ff14f0', 6);
    line(s, 'e', '985,850 1020,810 1060,710 1110,545 1170,545 1210,585 1260,620', '#ff14f0', 6);

    curve(s, 'd', '110,890 170,950 230,1005 300,1030 370,1015 420,995 470,990 560,1020 610,1022 680,1005 770,970 850,945 890,930 960,915', '#108010', 6);
    curve(s, 'd', '1160,730 1190,790 1250,880 1320,945 1380,990 1430,1002 1470,980 1510,950', '#108010', 6);
    curve(s, 'e', '145,905 180,940 220,990 280,1015 320,990 350,970', '#108010', 6);
    curve(s, 'e', '610,762 660,772 710,765 750,810 800,825 860,880 950,875 985,855', '#108010', 6);
    curve(s, 'e', '1240,610 1270,625 1325,685', '#108010', 6);

    curve(s, 'd', '110,810 170,880 240,945 300,985 350,1000 420,1000 480,990 560,1010 640,1012 720,990 820,955 880,925 960,910 1010,885 1070,805 1110,740 1160,730 1190,738 1260,810 1340,890 1420,950 1470,960 1530,940 1568,925', '#1414c0', 3.2);
    curve(s, 'e', '0,918 80,905 150,905 200,925 260,955 350,965 400,940 470,880 520,835 570,780 610,762 720,762 780,790 850,818 900,848 970,858 1030,840 1080,780 1120,690 1170,630 1230,610 1270,612 1325,637', '#1414c0', 3.2);
    line(s, 'e', '675,762 718,762', '#2090f0', 5);
    line(s, 'e', '335,945 358,945', '#30b050', 2.5);
}

/* ---------- 仙人指路 ---------- */
function drawXr() {
    const s = document.getElementById('chartXr');
    frame(s, [1088, 1148.7], 1082, 1213, ['100.00', '50.00'], [1118]);

    bars(s, 'f', 'g175,472 g195,472', py('f', 450));
    seg(s, px('f', 110), 1208, px('g', 1325), 1208, '#f01010', 3);

    line(s, 'f', '110,312 170,355 212,387', '#2626c0', 1.1);
    line(s, 'f', '310,425 370,420 450,392 530,415 590,432 650,405 700,350 750,285 800,215 860,172 900,175 950,190 1000,170 1060,158 1110,195 1180,270 1290,380 1340,390 1415,415', '#2626c0', 1.1);
    line(s, 'f', '1465,410 1520,365 1568,350', '#2626c0', 1.1);
    line(s, 'g', '0,358 40,345 100,365 170,358 210,380 260,410 300,405 350,330 400,250 440,200 500,152 580,145 650,200 700,205 760,235 860,260 950,250 1000,225 1060,180 1110,160 1180,200 1240,245 1320,268', '#2626c0', 1.1);

    line(s, 'f', '110,412 145,425 175,448 212,435', '#f0106a', 3.2);
    line(s, 'f', '310,422 330,410 370,408 430,298 460,320 500,370 550,370 580,395 600,392 625,340 665,325 715,225 750,240 775,240 795,195 840,155 865,155 895,205 925,205 943,220 960,190 1030,135 1060,170 1100,240 1190,345 1240,380 1280,395 1320,395 1380,412 1415,420', '#f0106a', 3.2);
    line(s, 'f', '1465,420 1510,350 1568,260', '#f0106a', 3.2);
    line(s, 'g', '0,260 20,260 42,235 80,255 150,255 175,290 215,395 240,420 285,420 310,385 365,235 410,165 480,165 525,140 545,152 565,140 630,235 650,245 695,203 740,250 800,285 870,380 890,380 935,330 955,330 1000,215 1040,155 1060,155 1085,140 1130,205 1170,230 1240,272 1260,262 1300,272 1325,277', '#f0106a', 3.2);

    totem(s, 238);
    totem(s, 282);
    totem(s, 1440);

    downArrow(s, px('f', 880), py('f', 165));
    downArrow(s, px('f', 1052), py('f', 165));
    downArrow(s, px('g', 455), py('g', 155));
    downArrow(s, px('g', 585), py('g', 165));
    downArrow(s, px('g', 1105), py('g', 150));
}

/* ---------- MACD-COLA ---------- */
function drawCola() {
    const s = document.getElementById('chartCola');
    frame(s, [1276, 1320], 1240, 1385, ['1.00', '0.00'], [1298, 1342]);
    const base = 1320;
    seg(s, 342, base, 1544, base, '#a8a890', 1).setAttribute('stroke-dasharray', '3 4');

    bars(s, 'f', `r155,795 r175,785 r197,780 r218,763 r240,745 r261,740 r282,727 g304,722 r325,710 r346,710 r368,722 r389,713 r410,713 r431,732 r453,768 r475,800
        b110,825 R540,820 r623,790 r645,785 g667,782 r689,780 r710,770 r732,790 r753,790
        b860,815 b881,830 b902,848 R923,850 b945,852 b966,820 r988,790 r1009,745 r1031,712 g1054,728 r1076,790
        b1098,870 b1119,925 b1141,975 b1162,993 R1183,997 b1205,978 b1226,950 b1248,915 b1270,885 b1291,845
        r1333,782 r1355,775 r1376,772 r1398,750 r1419,740 r1440,718 r1461,708 r1483,680 g1505,690 r1526,690 r1548,718`, base);
    bars(s, 'g', `r0,755 b108,840 b130,845 R152,845 b174,857 b195,880 b217,880 R239,860 b260,835
        r304,780 r326,738 r347,718 r368,710 g390,708 r412,705 r434,740
        b522,825 b545,862 R567,840 b589,875 b610,925 b632,950 R653,952 b675,888 b697,860 b719,885 b741,888 b762,875 b784,845 b806,830 b827,825
        r892,785 r913,770 r935,755 g957,755 r978,730 r1000,725 r1021,735 r1043,700 r1065,695 r1087,670 g1108,675
        b1152,875 b1174,915 b1195,915 b1217,915 R1239,915 b1261,915 b1282,915 b1304,915 b1325,915`, base);

    curve(s, 'f', '110,895 170,935 230,945 280,940 350,910 430,842 500,845 600,840 680,808 760,790 860,758 960,768 1030,690 1095,640 1150,680 1230,810 1290,885 1350,905 1410,925 1450,920 1510,840 1568,810', '#c040c0', 1.3);
    curve(s, 'g', '0,810 60,800 160,798 230,850 290,868 330,860 400,780 470,720 580,680 640,730 700,755 770,815 880,865 960,855 1030,800 1090,670 1150,625 1185,630 1250,700 1325,785', '#c040c0', 1.3);
    curve(s, 'f', '110,890 160,915 200,928 260,925 330,885 390,860 430,828 470,840 600,845 680,800 760,785 850,760 940,775 1000,740 1060,638 1100,650 1150,730 1200,810 1270,885 1330,890 1380,905 1440,880 1500,815 1568,790', '#4a9fd8', 1.3);
    curve(s, 'g', '0,800 50,790 150,795 200,840 250,870 300,860 370,790 420,720 470,700 570,682 610,730 650,780 680,770 750,830 870,858 940,835 1000,800 1060,730 1115,620 1180,680 1240,755 1270,760 1325,820', '#4a9fd8', 1.3);

    line(s, 'f', '965,770 1000,720 1030,660 1055,635', '#f00808', 5);
    line(s, 'g', '395,765 420,730 480,712 540,700 570,690 590,700', '#f00808', 5);
    line(s, 'g', '675,768 700,768', '#f00808', 5);
    line(s, 'g', '980,810 1020,790 1060,730 1090,630 1108,607', '#f00808', 5);
    line(s, 'f', '490,845 585,845', '#0808e0', 2);
    line(s, 'f', '560,845 585,845', '#0808e0', 5);
    line(s, 'g', '258,872 285,872', '#0808e0', 5);
    line(s, 'f', '1485,670 1530,680 1568,685', '#2090e0', 5);
    line(s, 'g', '0,683 200,720 380,755 460,770', '#2090e0', 5);

    upArrow(s, px('f', 538), py('f', 860));
    upArrow(s, px('g', 280), py('g', 900));
    cross(s, px('f', 600), py('f', 880), '#f01818');
    cross(s, px('f', 133), py('f', 940), '#f01818');
    cross(s, px('f', 770), py('f', 825), '#10d040');
    cross(s, px('f', 815), py('f', 810), '#10d040');
    cross(s, px('f', 1097), py('f', 700), '#10d040');
    cross(s, px('g', 500), py('g', 745), '#10d040');
    downArrow(s, px('f', 750), py('f', 800));
    downArrow(s, px('g', 20), py('g', 800));
    gem(s, px('f', 1330), py('f', 935), '#f0506a');
    gem(s, px('g', 300), py('g', 905), '#f0506a');
    gem(s, px('g', 888), py('g', 898), '#f0506a');
    gem(s, px('g', 457), py('g', 805), '#60d080');
    gem(s, px('g', 65), py('g', 825), '#60b0f0');
    gem(s, px('g', 1127), py('g', 668), '#60b0f0');

    add(s, 'text', { class: 'note note-faint', x: 343, y: 1378 }, '用到未来数据');
}

drawMain();
drawVol();
drawMacd();
drawXr();
drawCola();
```
